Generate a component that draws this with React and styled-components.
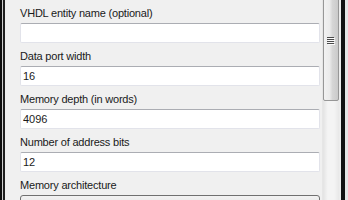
import React from 'react';
import styled, { createGlobalStyle } from 'styled-components';

const GlobalStyle = createGlobalStyle`
  html, body {
    margin: 0;
    padding: 0;
    background: #f0f0f0;
  }
  * {
    box-sizing: border-box;
  }
`;

const Window = styled.div`
  display: flex;
  width: 348px;
  height: 200px;
  overflow: hidden;
  background: #f0f0f0;
  font-family: 'Liberation Sans', Arial, sans-serif;
  font-size: 11px;
  color: #1a1a1a;
`;

const LeftEdge = styled.div`
  width: 5px;
  flex-shrink: 0;
  background: linear-gradient(
    to right,
    #0d0d0d 0 2px,
    #cfcfcf 2px 3px,
    #1e1e1e 3px 5px
  );
`;

const RightEdge = styled.div`
  width: 9px;
  flex-shrink: 0;
  background: linear-gradient(
    to right,
    #ececec 0 2px,
    #121212 2px 6px,
    #e6e6e6 6px 9px
  );
`;

const Panel = styled.div`
  flex: 1;
  display: flex;
  flex-direction: column;
  gap: 6px;
  padding: 0 2px 0 15px;
  background: #f0f0f0;
`;

const TopRow = styled.div`
  height: 1px;
  display: flex;
  align-items: flex-end;
  gap: 5px;
  overflow: hidden;
`;

const StubInput = styled.div`
  flex: 1;
  height: 20px;
  background: #fff;
  border: 1px solid #e2e3ea;
  border-radius: 2px;
`;

const StubButton = styled.div`
  width: 70px;
  height: 22px;
  border: 1px solid #707070;
  border-radius: 3px;
  background: #dddddd;
`;

const Field = styled.div`
  display: flex;
  flex-direction: column;
  gap: 2px;
`;

const Label = styled.label`
  display: block;
  height: 15px;
  line-height: 15px;
  letter-spacing: -0.2px;
  white-space: nowrap;
`;

const Input = styled.input`
  display: block;
  width: 100%;
  height: 20px;
  margin: 0;
  padding: 0 2px;
  border: 1px solid #e2e3ea;
  border-top-color: #abadb3;
  border-radius: 2px;
  background: #fff;
  font-family: inherit;
  font-size: 11px;
  color: #1a1a1a;
  outline: none;
`;

const Select = styled.div`
  height: 21px;
  border: 1px solid #707070;
  border-radius: 3px;
  background: linear-gradient(#f2f2f2, #e6e6e6 50%, #dddddd 50%, #cfcfcf);
`;

const Scrollbar = styled.div`
  width: 17px;
  flex-shrink: 0;
  display: flex;
  flex-direction: column;
  background: linear-gradient(to right, #e3e3e3, #f4f4f4 30%, #f4f4f4 70%, #e8e8e8);
  border-left: 1px solid #e6e6e6;
`;

const Thumb = styled.div`
  height: 104px;
  margin-top: -3px;
  display: flex;
  align-items: center;
  justify-content: center;
  border: 1px solid #979797;
  border-radius: 2px;
  background: linear-gradient(
    to right,
    #f2f2f2 0%,
    #ebebeb 40%,
    #d6d6d6 60%,
    #cacaca 100%
  );
`;

const Grip = () => (
  <svg width="8" height="9" viewBox="0 0 8 9" style={{ marginTop: -16 }}>
    {[0, 2, 4, 6].map((y) => (
      <g key={y}>
        <rect x="0" y={y} width="7" height="1" fill="#4a4a4a" />
        <rect x="1" y={y + 1} width="7" height="1" fill="#fafafa" />
      </g>
    ))}
  </svg>
);

const fields = [
  { label: 'VHDL entity name (optional)', value: '' },
  { label: 'Data port width', value: '16' },
  { label: 'Memory depth (in words)', value: '4096' },
  { label: 'Number of address bits', value: '12' },
];

const App = () => (
  <>
    <GlobalStyle />
    <Window>
      <LeftEdge />
      <Panel>
        <TopRow>
          <StubInput />
          <StubButton />
        </TopRow>
        {fields.map((f) => (
          <Field key={f.label}>
            <Label>{f.label}</Label>
            <Input defaultValue={f.value} readOnly />
          </Field>
        ))}
        <Field>
          <Label>Memory architecture</Label>
          <Select />
        </Field>
      </Panel>
      <Scrollbar>
        <Thumb>
          <Grip />
        </Thumb>
      </Scrollbar>
      <RightEdge />
    </Window>
  </>
);

export default App;
